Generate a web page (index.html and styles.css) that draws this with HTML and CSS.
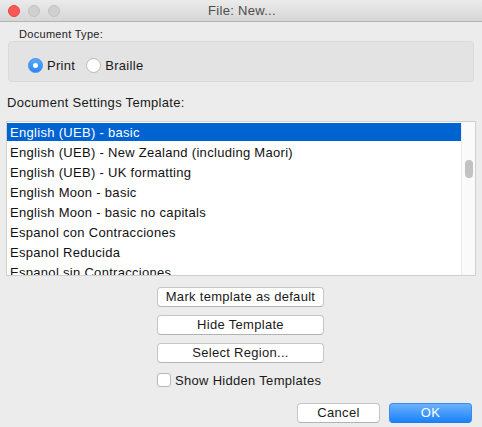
FILE: index.html
```html
<!DOCTYPE html>
<html>
<head>
<meta charset="utf-8">
<link rel="stylesheet" href="styles.css">
</head>
<body>
<div class="window">
  <div class="titlebar">
    <div class="lights">
      <span class="light red"></span>
      <span class="light gray"></span>
      <span class="light gray"></span>
    </div>
    <div class="title">File: New...</div>
  </div>
  <div class="doctype-label">Document Type:</div>
  <div class="groupbox">
    <label class="radio-item"><span class="radio on"></span><span>Print</span></label>
    <label class="radio-item"><span class="radio"></span><span>Braille</span></label>
  </div>
  <div class="template-label">Document Settings Template:</div>
  <div class="listbox">
    <div class="rows">
      <div class="row selected"><span>English (UEB) - basic</span></div>
      <div class="row"><span>English (UEB) - New Zealand (including Maori)</span></div>
      <div class="row"><span>English (UEB) - UK formatting</span></div>
      <div class="row"><span>English Moon - basic</span></div>
      <div class="row"><span>English Moon - basic no capitals</span></div>
      <div class="row"><span>Espanol con Contracciones</span></div>
      <div class="row"><span>Espanol Reducida</span></div>
      <div class="row"><span>Espanol sin Contracciones</span></div>
    </div>
    <div class="scrollbar"><div class="thumb"></div></div>
  </div>
  <div class="actions">
    <button class="btn wide">Mark template as default</button>
    <button class="btn wide">Hide Template</button>
    <button class="btn wide">Select Region...</button>
    <label class="check-item"><span class="checkbox"></span><span>Show Hidden Templates</span></label>
  </div>
  <div class="footer">
    <button class="btn small">Cancel</button>
    <button class="btn small primary">OK</button>
  </div>
</div>
</body>
</html>
```

FILE: styles.css
```css
html, body {
  margin: 0;
  padding: 0;
}
body {
  width: 482px;
  height: 427px;
  overflow: hidden;
  background: #ececec;
  font-family: "Liberation Sans", Arial, sans-serif;
  font-size: 13px;
  letter-spacing: 0.3px;
  color: #1a1a1a;
}
.window {
  width: 482px;
  height: 427px;
  display: flex;
  flex-direction: column;
  background: #ececec;
}
.titlebar {
  height: 21px;
  border-bottom: 1px solid #b4b4b4;
  background: linear-gradient(#ebebeb, #d6d6d6);
  display: flex;
  align-items: center;
  position: relative;
}
.lights {
  display: flex;
  gap: 8px;
  padding-left: 8px;
}
.light {
  width: 12px;
  height: 12px;
  border-radius: 50%;
  box-sizing: border-box;
}
.light.red {
  background: #fc5753;
  border: 1px solid #df4744;
}
.light.gray {
  background: #d0d0d0;
  border: 1px solid #c2c2c2;
}
.title {
  position: absolute;
  left: 0;
  right: 0;
  top: 0;
  line-height: 22px;
  text-align: center;
  color: #4d4d4d;
  font-size: 13px;
  padding-left: 2px;
}
.doctype-label {
  margin: 5px 0 0 19px;
  font-size: 11px;
  line-height: 14px;
  color: #222;
}
.groupbox {
  margin: 0 8px;
  height: 41px;
  box-sizing: border-box;
  background: #e3e3e3;
  border: 1px solid #dadada;
  border-radius: 4px;
  display: flex;
  align-items: flex-start;
  padding: 15px 0 0 19px;
  gap: 11px;
}
.radio-item {
  display: flex;
  align-items: center;
  gap: 4px;
  height: 16px;
  font-size: 13px;
}
.radio {
  width: 15px;
  height: 15px;
  border-radius: 50%;
  box-sizing: border-box;
  background: #fff;
  border: 1px solid #b9b9b9;
  position: relative;
}
.radio.on {
  background: linear-gradient(#5aa9fb, #2b87f8);
  border: 1px solid #3a8ef0;
}
.radio.on::after {
  content: "";
  position: absolute;
  left: 4px;
  top: 4px;
  width: 5px;
  height: 5px;
  border-radius: 50%;
  background: #fff;
}
.template-label {
  margin: 13px 0 0 7px;
  line-height: 16px;
}
.listbox {
  margin: 10px 0 0 6px;
  width: 470px;
  height: 155px;
  box-sizing: border-box;
  border: 1px solid #cfcfcf;
  background: #fff;
  display: flex;
  overflow: hidden;
}
.rows {
  flex: 1;
  overflow: hidden;
}
.row {
  height: 20px;
  display: flex;
  align-items: center;
  padding: 1px 0 0 3px;
  box-sizing: border-box;
  white-space: nowrap;
  color: #111;
}
.row.selected {
  background: #0063d2;
  color: #fff;
  height: 18px;
  margin: 1px 0;
  padding-top: 0;
}
.scrollbar {
  width: 14px;
  border-left: 1px solid #ebebeb;
  background: #fafafa;
  padding-top: 38px;
  box-sizing: border-box;
}
.thumb {
  width: 8px;
  height: 18px;
  margin-left: 3px;
  border-radius: 4px;
  background: #c2c2c2;
}
.actions {
  margin-top: 11px;
  display: flex;
  flex-direction: column;
  align-items: flex-start;
  padding-left: 157px;
  gap: 8px;
}
.btn {
  font-family: inherit;
  font-size: 13px;
  letter-spacing: 0.3px;
  color: #1a1a1a;
  background: #fff;
  border: 1px solid #c6c6c6;
  border-bottom-color: #b3b3b3;
  border-radius: 4px;
  height: 20px;
  padding: 0;
  line-height: 18px;
  box-sizing: border-box;
}
.btn.wide {
  width: 167px;
}
.check-item {
  margin-top: 2px;
  display: flex;
  align-items: center;
  gap: 4px;
  height: 14px;
}
.checkbox {
  width: 14px;
  height: 14px;
  box-sizing: border-box;
  background: #fff;
  border: 1px solid #b9b9b9;
  border-radius: 3px;
}
.footer {
  margin-top: 16px;
  display: flex;
  justify-content: flex-end;
  gap: 9px;
  padding-right: 10px;
}
.btn.small {
  width: 83px;
}
.btn.primary {
  background: linear-gradient(#6cb2fb, #1a82fb);
  border: 1px solid #3a8af2;
  border-bottom-color: #2a78e0;
  color: #fff;
}
```
